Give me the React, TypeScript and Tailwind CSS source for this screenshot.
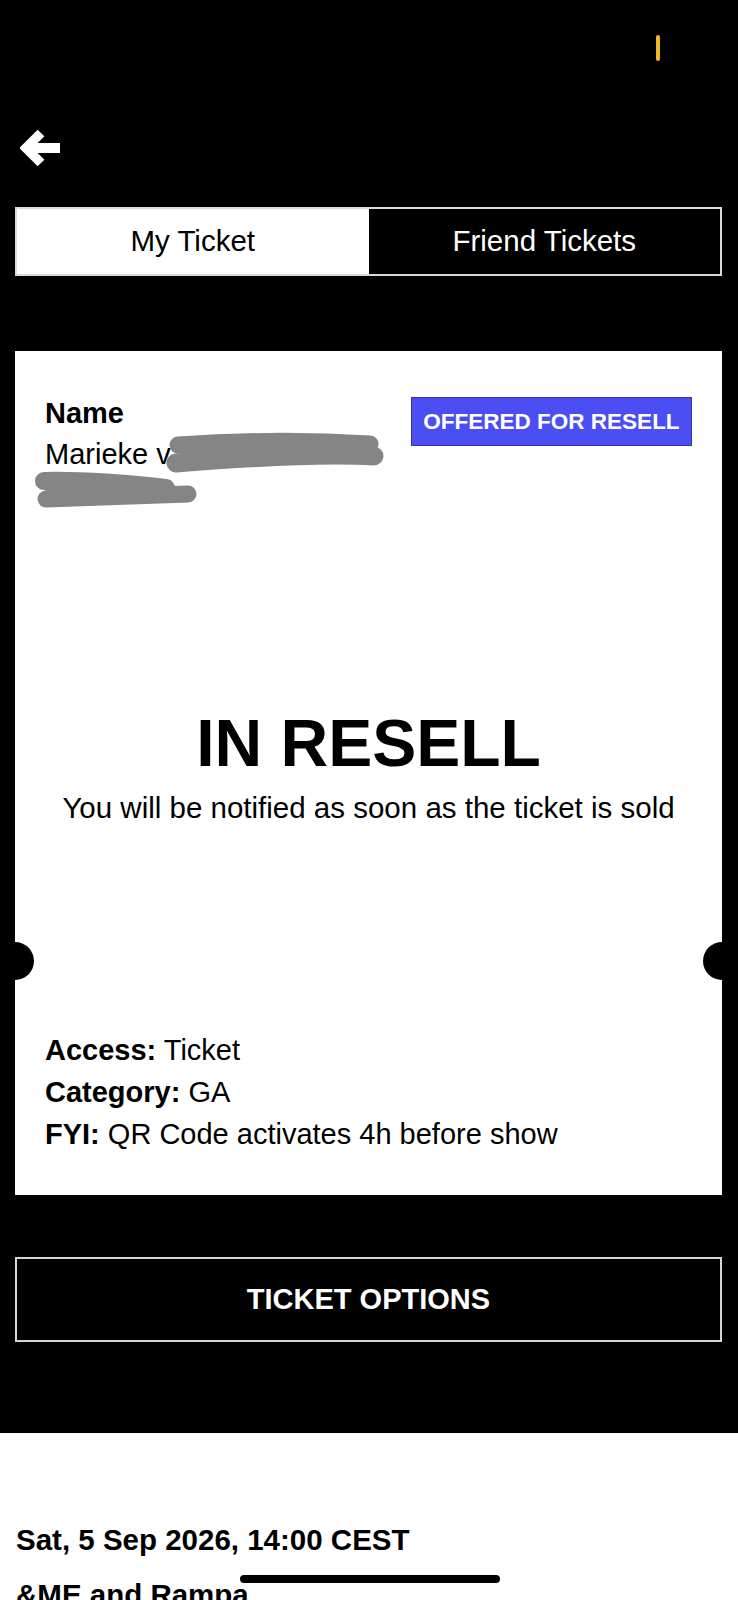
import React from 'react';

const font = { fontFamily: '"Liberation Sans", Arial, Helvetica, sans-serif' };

function BackArrow() {
  return (
    <svg width="40" height="40" viewBox="0 0 40 40" fill="none">
      <path d="M40 19 H7" stroke="white" strokeWidth="10" />
      <path d="M21 4 L6 19 L21 34" stroke="white" strokeWidth="9.5" strokeLinejoin="miter" />
    </svg>
  );
}

// grey scribbles that hide the rest of the name
function Scribbles() {
  return (
    <svg
      className="absolute left-0 top-0 pointer-events-none"
      width="707"
      height="200"
      viewBox="15 351 707 200"
    >
      <g stroke="#858585" strokeLinecap="round" fill="none">
        <path d="M178 445 C 250 440, 320 441, 370 444" strokeWidth="17" />
        <path d="M176 463 C 250 457, 320 453, 374 456" strokeWidth="19" />
        <path d="M190 452 L 360 452" strokeWidth="16" />
        <path d="M44 481 C 90 480, 130 484, 166 488" strokeWidth="18" />
        <path d="M46 499 C 100 497, 150 495, 188 494" strokeWidth="17" />
        <path d="M52 490 L 172 492" strokeWidth="14" />
      </g>
    </svg>
  );
}

export default function App() {
  return (
    <div className="relative w-[738px] h-[1600px] overflow-hidden bg-white" style={font}>
      <div className="h-[1433px] bg-black flex flex-col">
        {/* status bar */}
        <div className="h-[100px] flex justify-end items-start pt-[35px] pr-[78px]">
          <div className="w-[4px] h-[26px] rounded-full bg-[#e9b92a]"></div>
        </div>
        <div className="h-[107px] pl-[20px] pt-[29px]">
          <BackArrow />
        </div>

        {/* tabs */}
        <div className="ml-[15px] mr-[16px] h-[69px] flex border-2 border-[#dadada]">
          <div className="flex-1 bg-white text-black flex items-center justify-center text-[29.5px]">
            My Ticket
          </div>
          <div className="flex-1 bg-black text-white flex items-center justify-center text-[29.5px]">
            Friend Tickets
          </div>
        </div>

        {/* ticket card */}
        <div className="relative ml-[15px] mr-[16px] mt-[75px] h-[844px] bg-white flex flex-col px-[30px] pt-[42px] pb-[40px] text-black">
          <div className="flex justify-between items-start">
            <div className="text-[29px] leading-[41px]">
              <div className="font-bold">Name</div>
              <div>Marieke va</div>
              <div className="h-[41px]"></div>
            </div>
            <div className="mt-[4px] w-[281px] h-[49px] bg-[#4b4ef2] border border-[#3434a8] flex items-center justify-center text-white font-bold text-[22.5px]">
              OFFERED FOR RESELL
            </div>
          </div>
          <Scribbles />

          <div className="mt-[194px] flex flex-col items-center">
            <div className="text-[66px] leading-[66px] font-bold">IN RESELL</div>
            <div className="mt-[14px] text-[29.5px] leading-[36px]">
              You will be notified as soon as the ticket is sold
            </div>
          </div>

          <div className="mt-auto text-[29px] leading-[42px]">
            <div>
              <span className="font-bold">Access:</span> Ticket
            </div>
            <div>
              <span className="font-bold">Category:</span> GA
            </div>
            <div>
              <span className="font-bold">FYI:</span> QR Code activates 4h before show
            </div>
          </div>

          {/* ticket notches */}
          <div className="absolute left-[-19px] top-[591px] w-[38px] h-[38px] rounded-full bg-black"></div>
          <div className="absolute right-[-19px] top-[591px] w-[38px] h-[38px] rounded-full bg-black"></div>
        </div>

        <button className="ml-[15px] mr-[16px] mt-[62px] h-[85px] border-2 border-[#d6d6d6] bg-black text-white font-bold text-[29px] flex items-center justify-center">
          TICKET OPTIONS
        </button>
      </div>

      <div className="px-[16px] pt-[86px] text-black font-bold text-[29.5px] leading-[42px]">
        <div>Sat, 5 Sep 2026, 14:00 CEST</div>
        <div className="mt-[13px]">&amp;ME and Rampa</div>
      </div>

      {/* home indicator */}
      <div className="absolute left-[240px] top-[1575px] w-[260px] h-[8px] rounded-full bg-black"></div>
    </div>
  );
}
